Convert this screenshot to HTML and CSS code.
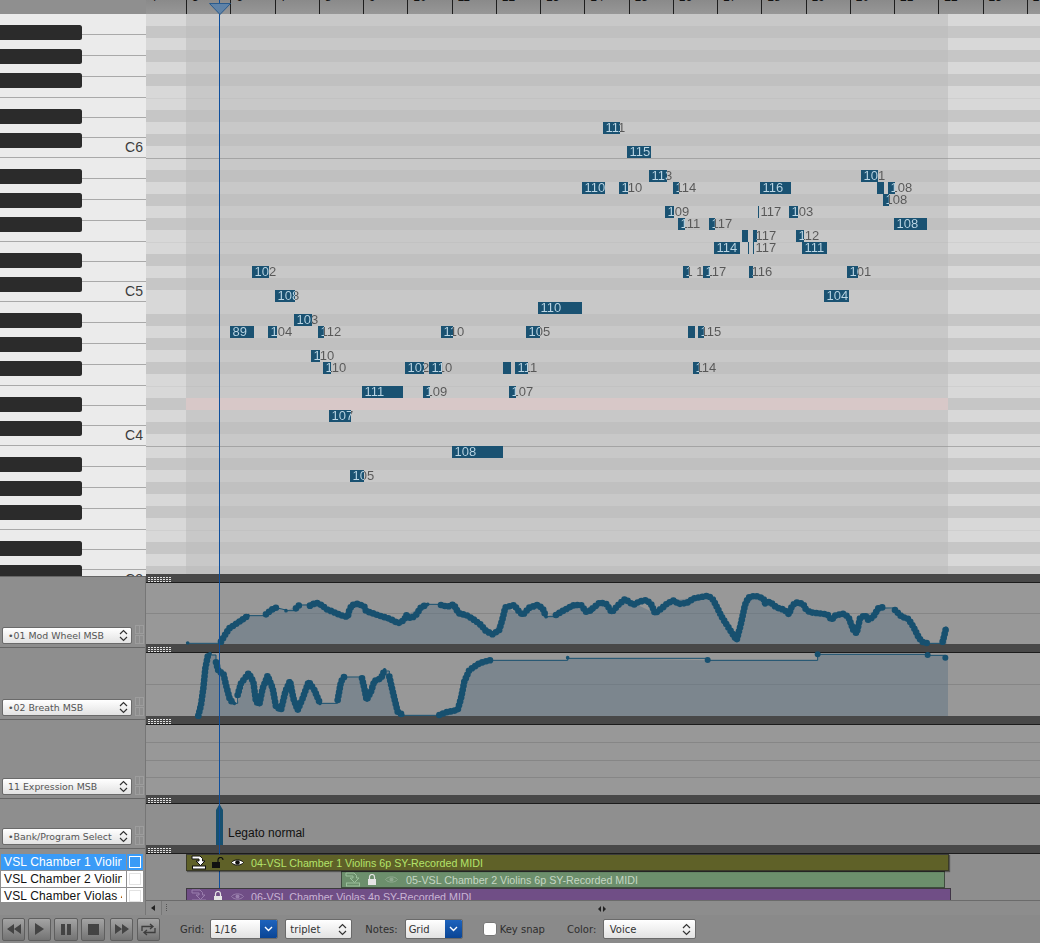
FILE: index.html
```html
<!DOCTYPE html>
<html lang="en">
<head>
<meta charset="utf-8">
<title>Piano roll</title>
<link rel="stylesheet" href="styles.css">
</head>
<body>
<div class="app">
  <div class="main">
    <aside class="left">
      <div class="corner"></div>
      <div class="piano">
        <svg class="keys" width="146" height="563" aria-hidden="true">
          <defs>
            <pattern id="octave" width="146" height="144" patternUnits="userSpaceOnUse">
              <rect width="146" height="144" fill="#ebebeb"/>
              <g fill="#a9a9a9">
                <rect x="82" y="20" width="64" height="1"/><rect x="82" y="41" width="64" height="1"/><rect x="82" y="62" width="64" height="1"/>
                <rect x="0" y="83" width="146" height="1"/>
                <rect x="82" y="103" width="64" height="1"/><rect x="82" y="123" width="64" height="1"/>
                <rect x="0" y="143" width="146" height="1"/>
              </g>
              <g fill="#2b2b2b">
                <rect x="-5" y="11" width="87" height="15" rx="2.5"/><rect x="-5" y="35" width="87" height="15" rx="2.5"/><rect x="-5" y="59" width="87" height="15" rx="2.5"/>
                <rect x="-5" y="95" width="87" height="15" rx="2.5"/><rect x="-5" y="119" width="87" height="15" rx="2.5"/>
              </g>
            </pattern>
          </defs>
          <rect width="146" height="563" fill="url(#octave)"/>
        </svg>
        <span class="oct oct-6">C6</span>
        <span class="oct oct-5">C5</span>
        <span class="oct oct-4">C4</span>
        <span class="oct oct-3">C3</span>
      </div>
      <div class="ctl ctl-1">
        <div class="sel lane-sel"><span>•01 Mod Wheel MSB</span><svg class="chev" width="9" height="13" viewBox="0 0 9 13"><path d="M1 5l3.5-3.5L8 5M1 8l3.5 3.5L8 8"/></svg></div>
        <div class="mini"><i></i><i></i></div>
      </div>
      <div class="ctl ctl-2">
        <div class="sel lane-sel"><span>•02 Breath MSB</span><svg class="chev" width="9" height="13" viewBox="0 0 9 13"><path d="M1 5l3.5-3.5L8 5M1 8l3.5 3.5L8 8"/></svg></div>
        <div class="mini"><i></i><i></i></div>
      </div>
      <div class="ctl ctl-3">
        <div class="sel lane-sel"><span>11 Expression MSB</span><svg class="chev" width="9" height="13" viewBox="0 0 9 13"><path d="M1 5l3.5-3.5L8 5M1 8l3.5 3.5L8 8"/></svg></div>
        <div class="mini"><i></i><i></i></div>
      </div>
      <div class="ctl ctl-4">
        <div class="sel lane-sel"><span>•Bank/Program Select</span><svg class="chev" width="9" height="13" viewBox="0 0 9 13"><path d="M1 5l3.5-3.5L8 5M1 8l3.5 3.5L8 8"/></svg></div>
        <div class="mini"><i></i><i></i></div>
      </div>
      <ul class="tracklist">
        <li class="tr tr-on"><span class="tname">VSL Chamber 1 Violins 6p</span><span class="tcheck"><b></b></span></li>
        <li class="tr"><span class="tname">VSL Chamber 2 Violins 6p</span><span class="tcheck"><b></b></span></li>
        <li class="tr"><span class="tname">VSL Chamber Violas 4p SY</span><span class="tcheck"><b></b></span></li>
      </ul>
    </aside>

    <section class="right">
      <div class="ruler">
        <span class="bar bar-first">4</span><span class="bar">5</span><span class="bar">6</span><span class="bar">7</span><span class="bar">8</span><span class="bar">9</span><span class="bar">10</span><span class="bar">11</span><span class="bar">12</span><span class="bar">13</span><span class="bar">14</span><span class="bar">15</span><span class="bar">16</span><span class="bar">17</span><span class="bar">18</span><span class="bar">19</span><span class="bar">20</span><span class="bar">21</span><span class="bar">22</span><span class="bar">23</span><span class="bar">24</span>
      </div>
      <div class="roll stripes">
        <div class="range stripes"><div class="pinkrow"></div></div>
        <div class="notes">
          <div class="note" style="left:603px;top:122px;--w:17px">111</div>
          <div class="note" style="left:627px;top:146px;--w:24px">115</div>
          <div class="note" style="left:649px;top:170px;--w:18px">113</div>
          <div class="note" style="left:582px;top:182px;--w:23px">110</div>
          <div class="note" style="left:619px;top:182px;--w:9px">110</div>
          <div class="note" style="left:673px;top:182px;--w:6px">114</div>
          <div class="note" style="left:760px;top:182px;--w:31px">116</div>
          <div class="note" style="left:861px;top:170px;--w:17px">101</div>
          <div class="note" style="left:877px;top:182px;--w:7px"></div>
          <div class="note" style="left:888px;top:182px;--w:7px">108</div>
          <div class="note" style="left:883px;top:194px;--w:6px">108</div>
          <div class="note" style="left:758px;top:206px;--w:1px">117</div>
          <div class="note" style="left:789px;top:206px;--w:9px">103</div>
          <div class="note" style="left:665px;top:206px;--w:9px">109</div>
          <div class="note" style="left:678px;top:218px;--w:7px">111</div>
          <div class="note" style="left:709px;top:218px;--w:6px">117</div>
          <div class="note" style="left:894px;top:218px;--w:33px">108</div>
          <div class="note" style="left:742px;top:230px;--w:6px"></div>
          <div class="note" style="left:753px;top:230px;--w:4px">117</div>
          <div class="note" style="left:796px;top:230px;--w:8px">112</div>
          <div class="note" style="left:714px;top:242px;--w:26px">114</div>
          <div class="note" style="left:748px;top:242px;--w:1px"></div>
          <div class="note" style="left:753px;top:242px;--w:1px">117</div>
          <div class="note" style="left:802px;top:242px;--w:25px">111</div>
          <div class="note" style="left:252px;top:266px;--w:17px">102</div>
          <div class="note" style="left:683px;top:266px;--w:6px">1 1</div>
          <div class="note" style="left:703px;top:266px;--w:7px">117</div>
          <div class="note" style="left:749px;top:266px;--w:4px">116</div>
          <div class="note" style="left:847px;top:266px;--w:11px">101</div>
          <div class="note" style="left:275px;top:290px;--w:20px">108</div>
          <div class="note" style="left:824px;top:290px;--w:25px">104</div>
          <div class="note" style="left:538px;top:302px;--w:44px">110</div>
          <div class="note" style="left:294px;top:314px;--w:18px">103</div>
          <div class="note" style="left:230px;top:326px;--w:24px">89</div>
          <div class="note" style="left:268px;top:326px;--w:9px">104</div>
          <div class="note" style="left:318px;top:326px;--w:6px">112</div>
          <div class="note" style="left:441px;top:326px;--w:12px">110</div>
          <div class="note" style="left:526px;top:326px;--w:14px">105</div>
          <div class="note" style="left:688px;top:326px;--w:7px"></div>
          <div class="note" style="left:698px;top:326px;--w:6px">115</div>
          <div class="note" style="left:311px;top:350px;--w:9px">110</div>
          <div class="note" style="left:323px;top:362px;--w:8px">110</div>
          <div class="note" style="left:405px;top:362px;--w:19px">102</div>
          <div class="note" style="left:429px;top:362px;--w:13px">110</div>
          <div class="note" style="left:503px;top:362px;--w:8px"></div>
          <div class="note" style="left:515px;top:362px;--w:13px">111</div>
          <div class="note" style="left:693px;top:362px;--w:6px">114</div>
          <div class="note" style="left:362px;top:386px;--w:41px">111</div>
          <div class="note" style="left:423px;top:386px;--w:7px">109</div>
          <div class="note" style="left:509px;top:386px;--w:7px">107</div>
          <div class="note" style="left:329px;top:410px;--w:22px">107</div>
          <div class="note" style="left:452px;top:446px;--w:51px">108</div>
          <div class="note" style="left:350px;top:470px;--w:14px">105</div>
        </div>
      </div>
      <div class="split"><span class="grip"></span></div>
      <div class="lane lane-1"></div>
      <div class="split"><span class="grip"></span></div>
      <div class="lane lane-2"></div>
      <div class="split"><span class="grip"></span></div>
      <div class="lane lane-3"></div>
      <div class="split"><span class="grip"></span></div>
      <div class="lane lane-4">
        <svg class="legato-bar" width="7" height="41" viewBox="0 0 7 41"><path d="M3.5 0L7 6V41H0V6z"/></svg>
        <span class="legato">Legato normal</span>
      </div>
      <div class="split"><span class="grip"></span></div>
      <div class="tracks">
        <div class="region reg-1">
          <svg class="midi" width="16" height="15" viewBox="0 0 16 15"><path class="midi-arrow" d="M1 1h8l2.500 2.500V6H14L9.500 10.500 5 6h3V4H1z"/><rect class="midi-base" x="1.500" y="11" width="13" height="3"/></svg>
          <svg class="lock" width="12" height="11" viewBox="0 0 12 11"><rect x="0" y="5" width="8" height="6"/><path class="shackle" d="M6 5V3a2.500 2.500 0 0 1 5 0"/></svg>
          <svg class="eye" width="13" height="9" viewBox="0 0 13 9"><path d="M.5 4.500C3 1 10 1 12.500 4.500 10 8 3 8 .5 4.500z" fill="#fff" stroke="#111"/><circle cx="6.500" cy="4.500" r="2.300" fill="#111"/></svg>
          <span class="rname">04-VSL Chamber 1 Violins 6p SY-Recorded MIDI</span>
        </div>
        <div class="region reg-2">
          <svg class="midi" width="16" height="15" viewBox="0 0 16 15"><path class="midi-arrow" d="M1 1h8l2.500 2.500V6H14L9.500 10.500 5 6h3V4H1z"/><rect class="midi-base" x="1.500" y="11" width="13" height="3"/></svg>
          <svg class="lock" width="12" height="11" viewBox="0 0 12 11"><rect x="2" y="5" width="8" height="6"/><path class="shackle" d="M3.500 5V3a2.500 2.500 0 0 1 5 0v2"/></svg>
          <svg class="eye" width="13" height="9" viewBox="0 0 13 9"><path d="M.5 4.500C3 1 10 1 12.500 4.500 10 8 3 8 .5 4.500z" fill="none" stroke="#8fa98f"/><circle cx="6.500" cy="4.500" r="2" fill="#8fa98f"/></svg>
          <span class="rname">05-VSL Chamber 2 Violins 6p SY-Recorded MIDI</span>
        </div>
        <div class="region reg-3">
          <svg class="midi" width="16" height="15" viewBox="0 0 16 15"><path class="midi-arrow" d="M1 1h8l2.500 2.500V6H14L9.500 10.500 5 6h3V4H1z"/><rect class="midi-base" x="1.500" y="11" width="13" height="3"/></svg>
          <svg class="lock" width="12" height="11" viewBox="0 0 12 11"><rect x="2" y="5" width="8" height="6"/><path class="shackle" d="M3.500 5V3a2.500 2.500 0 0 1 5 0v2"/></svg>
          <svg class="eye" width="13" height="9" viewBox="0 0 13 9"><path d="M.5 4.500C3 1 10 1 12.500 4.500 10 8 3 8 .5 4.500z" fill="none" stroke="#9a80ad"/><circle cx="6.500" cy="4.500" r="2" fill="#9a80ad"/></svg>
          <span class="rname">06-VSL Chamber Violas 4p SY-Recorded MIDI</span>
        </div>
      </div>
      <div class="hscroll">
        <span class="arrow-left"></span><span class="dots"></span>
        <span class="resize"><i></i><i></i></span>
      </div>

      <svg class="curves" viewBox="0 0 2682 450" width="894" height="150" aria-hidden="true">
        <defs>
          <path id="mod-a" d="M125,204h0 M225,200 240,175 250,160 265,150 280,140 295,130 306,122 M360,118 375,105 390,98 M420,107h0 M450,100 460,90 M492,92 510,83 530,92 540,102 560,110 582,120 605,126 610,105 618,90 636,86 655,95 660,108 683,116 710,125 733,132 756,145 775,135 780,120 795,130 810,120 825,97 845,88 M885,90 905,95 923,88 935,110 940,115 965,122 985,135 1005,150 1020,168 1040,178 1060,165 1070,130 1078,97 1105,90 1115,105 1130,120 1150,98 1175,90 1190,100 1200,125 M1230,120 1250,108 1270,97 1285,90 1305,90 1320,110 1340,105"/>
          <path id="mod-b" d="M8,100 30,82 50,88 65,112 85,90 105,72 130,90 147,80 170,75 185,90 195,115 215,100 232,85 252,76 265,87 290,84 312,70 338,65 355,62 370,75 395,125 420,165 440,195 452,150 465,90 475,68 495,62 520,70 525,85 540,80 560,98 582,104 597,118 605,95 617,82 640,87 645,100 660,112 678,114 712,118 725,135 735,122 758,116 775,125 790,165 800,175 810,130 825,120 835,135 850,125 865,100 878,97 M915,105 935,125 955,132 970,155 985,185 995,200 1010,204 M1058,200 1062,185 1068,160"/>
          <path id="br-a" d="M157,422 165,390 172,340 178,280 186,240 192,236 M210,262 218,290 232,295 240,330 252,375 265,385 M275,360 285,325 308,295 322,320 330,380 340,388 350,340 365,302 380,340 390,395 405,405 418,350 432,318 442,370 455,405 470,370 488,320 505,345 522,385 M575,375 585,320 595,305 M648,310 655,340 662,375 675,350 685,318 705,310 716,285 M730,305 745,370 755,410 770,420 M880,420 900,412 935,405 945,370 955,320 970,285 1000,265 1015,260 1035,255 M1265,248h0"/>
          <path id="br-b" d="M353,255h0 M683,238h0 M1013,240h0 M1066,248h0"/>
        </defs>
        <polygon class="area" points="225,207 225,200 250,160 306,122 358,122 390,98 420,107 460,90 510,83 605,126 618,90 655,95 756,145 780,120 845,88 923,88 1040,178 1078,97 1130,120 1175,90 1200,125 1285,90 1320,110 1350,95 1350,207"/>
        <polygon class="area" points="157,423 172,340 186,238 210,240 210,262 232,295 265,385 275,385 308,295 340,388 365,302 405,405 432,318 455,405 488,320 522,385 575,385 595,306 648,308 662,375 685,318 716,288 730,290 755,410 770,421 880,421 935,405 970,285 1035,256 1265,256 1265,250 1350,250 1350,423"/>
        <path class="thin" d="M125,205H225 M306,122H358 M390,98L420,105 M420,107H450 M460,90H492 M845,88H885 M1200,125H1230 M192,240H210V262 M265,385H275V360 M522,385H575 M595,306H648 M716,288H730V305 M770,421H880 M1035,256H1265V250H1350"/>
        <use href="#mod-a" class="core"/><use href="#mod-a" class="beads"/>
        <use href="#br-a" class="core"/><use href="#br-a" class="beads"/>
        <g transform="translate(1332 0)">
          <polygon class="area" points="18,207 18,88 30,82 65,112 105,72 195,115 252,76 355,62 440,195 475,68 495,62 597,118 617,82 678,114 725,135 758,116 800,175 825,120 878,97 915,105 955,132 1010,204 1055,204 1070,155 1070,207"/>
          <polygon class="area" points="18,423 18,250 353,256 683,256 683,238 1013,238 1013,241 1074,241 1074,423"/>
          <path class="thin" d="M878,99H912 M1010,205H1055 M18,250H353V256H683V238H1013V241H1066"/>
          <use href="#mod-b" class="core"/><use href="#mod-b" class="beads"/>
          <use href="#br-b" class="dot"/>
        </g>
      </svg>

      <div class="playhead"></div>
      <svg class="playtop" width="22" height="12" viewBox="0 0 22 12"><path d="M.5 .5h21L11 11.500z"/></svg>
    </section>
  </div>

  <footer class="toolbar">
    <button class="tb b-1"><svg width="14" height="10" viewBox="0 0 14 10"><path d="M7 0v10L0 5zM14 0v10L7 5z"/></svg></button>
    <button class="tb b-2"><svg width="9" height="12" viewBox="0 0 9 12"><path d="M0 0l9 6-9 6z"/></svg></button>
    <button class="tb b-3"><svg width="10" height="11" viewBox="0 0 10 11"><path d="M0 0h4v11H0zM6 0h4v11H6z"/></svg></button>
    <button class="tb b-4"><svg width="11" height="11" viewBox="0 0 11 11"><path d="M0 0h11v11H0z"/></svg></button>
    <button class="tb b-5"><svg width="14" height="10" viewBox="0 0 14 10"><path d="M0 0l7 5-7 5zM7 0l7 5-7 5z"/></svg></button>
    <button class="tb b-6"><svg width="15" height="13" viewBox="0 0 15 13"><path d="M1 8V3.500h10M9 1l3 2.500L9 6M14 5v4.500H4M6 7L3 9.500 6 12" fill="none" stroke="#3d3d3d" stroke-width="1.300"/></svg></button>
    <label class="tlabel l-grid">Grid:</label>
    <div class="sel blue s-grid"><span>1/16</span><i class="bluecap"><svg width="9" height="6" viewBox="0 0 9 6"><path d="M1 1l3.500 3.500L8 1"/></svg></i></div>
    <div class="sel plain s-trip"><span>triplet</span><svg class="chev" width="9" height="13" viewBox="0 0 9 13"><path d="M1 5l3.500-3.500L8 5M1 8l3.500 3.500L8 8"/></svg></div>
    <label class="tlabel l-notes">Notes:</label>
    <div class="sel blue s-notes"><span>Grid</span><i class="bluecap"><svg width="9" height="6" viewBox="0 0 9 6"><path d="M1 1l3.500 3.500L8 1"/></svg></i></div>
    <span class="check"></span>
    <label class="tlabel l-key">Key snap</label>
    <label class="tlabel l-color">Color:</label>
    <div class="sel plain s-color"><span>Voice</span><svg class="chev" width="9" height="13" viewBox="0 0 9 13"><path d="M1 5l3.500-3.500L8 5M1 8l3.500 3.500L8 8"/></svg></div>
  </footer>
</div>
</body>
</html>
```

FILE: styles.css
```css
* { box-sizing: border-box; }
html, body { margin: 0; padding: 0; background: #8e8e8e; }
body { width: 1040px; height: 943px; overflow: hidden; font-family: "Liberation Sans", Arial, sans-serif; }
.app { width: 1040px; height: 943px; display: flex; flex-direction: column; }
.main { display: flex; height: 915px; }

/* left column */
.left { width: 146px; flex: none; display: flex; flex-direction: column; background: #8e8e8e; border-right: 1px solid #767676; }
.corner { height: 14px; background: #8f8f8f; margin-right: -1px; }
.piano { position: relative; height: 563px; overflow: hidden; margin-right: -1px; border-bottom: 1px solid #666; }
.keys { display: block; }
.oct { position: absolute; right: 3px; font-size: 14px; line-height: 14px; color: #3c3c3c; }
.oct-6 { top: 126px; }
.oct-5 { top: 270px; }
.oct-4 { top: 414px; }
.oct-3 { top: 558px; }

.ctl { display: flex; align-items: flex-end; padding: 0 0 3px 2px; border-bottom: 1px solid #666; gap: 3px; }
.ctl-1 { height: 71px; }
.ctl-2 { height: 72px; }
.ctl-3 { height: 79px; }
.ctl-4 { height: 50px; }

.sel { display: flex; align-items: center; justify-content: space-between; background: linear-gradient(#fff, #e2e2e2); border: 1px solid #6a6a6a; border-radius: 2px; font-family: "DejaVu Sans", sans-serif; font-size: 10px; color: #4c4c4c; white-space: nowrap; overflow: hidden; }
.lane-sel { width: 130px; height: 17px; padding: 0 3px 0 5px; font-size: 9.4px; color: #555; }
.chev { flex: none; fill: none; stroke: #333; stroke-width: 1.2; }
.mini { display: flex; flex-direction: column; width: 9px; height: 19px; gap: 1px; }
.mini i { display: block; height: 9px; border: 1px solid #9d9d9d; background: linear-gradient(#9d9d9d, #9d9d9d) 50% 50% / 1px 100% no-repeat; }

.tracklist { list-style: none; margin: 5px 0 0; padding: 0 2px 0 1px; height: 48px; overflow: hidden; display: flex; flex-direction: column; gap: 1px; flex: none; }
.tr { display: flex; height: 16px; flex: none; gap: 1px; }
.tname { width: 125px; background: #fff; color: #111; font-size: 12px; line-height: 16px; padding-left: 3px; border-right: 4px solid #fff; letter-spacing: .15px; white-space: nowrap; overflow: hidden; }
.tcheck { width: 16px; background: #fff; display: flex; align-items: center; justify-content: center; }
.tcheck b { width: 12px; height: 12px; border: 1px solid #e2e2e2; background: #fff; }
.tr-on .tname { background: #3a9bf7; color: #fff; border-right-color: #3a9bf7; }
.tr-on .tcheck { background: #3a9bf7; }
.tr-on .tcheck b { border-color: #fff; background: #3a9bf7; }

/* right column */
.right { position: relative; flex: 1; min-width: 0; display: flex; flex-direction: column; overflow: hidden; background: #989898; }
.ruler { display: flex; align-items: flex-start; height: 14px; flex: none; background: linear-gradient(#8a8a8a, #979797); overflow: hidden; }
.bar { flex: none; width: 44.25px; height: 23px; margin-top: -9px; border-left: 1px solid #1e1e1e; padding-left: 5px; font-size: 12px; line-height: 12px; color: #111; overflow: hidden; }
.bar-first { width: 40px; border-left: 0; padding-left: 4px; }

.stripes { background-image: repeating-linear-gradient(180deg,
  var(--l) 0 12px, var(--d) 12px 24px, var(--l) 24px 36px, var(--d) 36px 48px, var(--l) 48px 60px, var(--d) 60px 72px,
  var(--l) 72px 84px, var(--line2) 84px 85px, var(--l) 85px 96px, var(--d) 96px 108px, var(--l) 108px 120px, var(--d) 120px 132px, var(--l) 132px 144px,
  var(--line) 144px 145px, var(--l) 145px 156px, var(--d) 156px 168px, var(--l) 168px 180px, var(--d) 180px 192px, var(--l) 192px 204px, var(--d) 204px 216px,
  var(--l) 216px 228px, var(--line2) 228px 229px, var(--l) 229px 240px, var(--d) 240px 252px, var(--l) 252px 264px, var(--d) 264px 276px, var(--l) 276px 288px); }
.roll { position: relative; height: 560px; flex: none; --l: #d8d8d8; --d: #c6c6c6; --line: #a9a9a9; --line2: #cfcfcf; }
.range { position: absolute; left: 40px; top: 0; bottom: 0; width: 762px; --l: #c8c8c8; --d: #c0c0c0; --line: #a4a4a4; --line2: #c2c2c2; }
.pinkrow { position: absolute; left: 0; right: 0; top: 384px; height: 12px; background: #d8c8c8; }
.notes { position: absolute; left: -146px; top: -14px; }
.note {
  position: absolute; height: 12px; min-width: var(--w); padding-left: 2.5px;
  font-size: 13px; line-height: 12px; white-space: nowrap; color: transparent;
  background-image: linear-gradient(90deg, #bcd6e4 var(--w), #575757 var(--w)), linear-gradient(#1a5272, #1a5272);
  background-size: 100% 100%, var(--w) 100%;
  background-repeat: no-repeat;
  -webkit-background-clip: text, border-box;
  background-clip: text, border-box;
}

.split { position: relative; height: 9px; flex: none; background: #484848; border-bottom: 1px solid #1c1c1c; padding: 3px 0 0 2px; }
.grip { display: block; width: 24px; height: 5px; background: repeating-linear-gradient(180deg, #e0e0e0 0 1px, #484848 1px 2px, #e0e0e0 2px 3px, #484848 3px 4px, #e0e0e0 4px 5px); -webkit-mask: repeating-linear-gradient(90deg, #000 0 2px, transparent 2px 3px); mask: repeating-linear-gradient(90deg, #000 0 2px, transparent 2px 3px); }
.lane { position: relative; flex: none; background: #989898; }
.lane-1 { height: 61px; background: linear-gradient(#868686, #868686) 0 30px / 100% 1px no-repeat, #989898; }
.lane-2 { height: 63px; background: linear-gradient(#868686, #868686) 0 31px / 100% 1px no-repeat, #989898; }
.lane-3 { height: 70px; background: linear-gradient(#868686, #868686) 0 17px / 100% 1px no-repeat, linear-gradient(#868686, #868686) 0 35px / 100% 1px no-repeat, linear-gradient(#868686, #868686) 0 52px / 100% 1px no-repeat, #989898; }
.lane-4 { height: 41px; background: #8f8f8f; }
.legato-bar { position: absolute; left: 70px; top: 0; fill: #17506f; }
.legato { position: absolute; left: 82px; top: 22px; font-size: 12px; line-height: 14px; color: #111; }

.tracks { position: relative; height: 46px; flex: none; overflow: hidden; background: #8e8e8e; }
.region { position: absolute; display: flex; align-items: center; height: 17px; border: 1px solid rgba(40,40,40,.65); border-top-color: #3c3c3c; font-size: 10.7px; white-space: nowrap; overflow: hidden; }
.reg-1 { left: 40px; top: 0; width: 763px; background: #5f6128; color: #b3e36a; z-index: 3; box-shadow: 1px 1px 1px rgba(0,0,0,.4); }
.reg-2 { left: 195px; top: 17px; width: 604px; background: #6c8f6c; color: #c6d7c4; z-index: 2; }
.reg-3 { left: 40px; top: 34px; width: 765px; background: #704e86; color: #c9b4d4; z-index: 1; }
.midi { flex: none; margin-left: 4px; }
.midi-arrow { fill: #fff; stroke: #111; stroke-width: 1; }
.midi-base { fill: #fff; stroke: #111; stroke-width: 1; }
.reg-2 .midi-arrow, .reg-2 .midi-base { fill: none; stroke: #9cc09c; }
.reg-3 .midi-arrow, .reg-3 .midi-base { fill: none; stroke: #9a7fae; }
.lock { flex: none; margin-left: 5px; }
.lock rect { fill: #111; }
.lock .shackle { fill: none; stroke: #111; stroke-width: 1.200; }
.reg-2 .lock rect, .reg-3 .lock rect { fill: #e4e4e4; }
.reg-2 .lock .shackle, .reg-3 .lock .shackle { stroke: #e4e4e4; }
.eye { flex: none; margin-left: 7px; }
.rname { margin-left: 7px; }
.reg-2 .rname { margin-left: 8px; }
.reg-2 .midi { margin-left: 3px; }

.hscroll { position: relative; flex: 1; display: flex; align-items: center; background: #8d8d8d; border-top: 1px solid #6b6b6b; }
.arrow-left { width: 16px; height: 14px; background: #8f8f8f; border-right: 1px solid #777; position: relative; }
.arrow-left::after { content: ""; position: absolute; left: 5px; top: 4px; border: 3px solid transparent; border-right: 4px solid #222; border-left: 0; }
.dots { width: 1px; height: 8px; margin-left: 4px; background: repeating-linear-gradient(180deg, #555 0 1px, transparent 1px 2px); }
.resize { position: absolute; left: 452px; top: 5px; display: flex; gap: 2px; }
.resize i { display: block; border: 3px solid transparent; border-left: 0; border-right: 3px solid #222; }
.resize i:last-child { border-left: 3px solid #222; border-right: 0; }

.curves { position: absolute; left: 0; top: 575px; }
.area { fill: #5f7383; fill-opacity: .5; }
.thin { fill: none; stroke: #17506f; stroke-width: 3; }
.core { fill: none; stroke: #17506f; stroke-width: 11; stroke-linecap: round; stroke-linejoin: round; }
.beads { fill: none; stroke: #17506f; stroke-width: 20; stroke-linecap: round; stroke-dasharray: 0 12; }
.dot { fill: none; stroke: #17506f; stroke-width: 18; stroke-linecap: round; }

.playhead { position: absolute; left: 73px; top: 0; width: 1px; height: 900px; background: #0f4f9c; }
.playtop { position: absolute; left: 63px; top: 3px; fill: #5f83a8; stroke: #2a5b8d; }

/* toolbar */
.toolbar { display: flex; align-items: center; height: 28px; flex: none; padding: 0 0 0 2px; background: #8a8a8a; }
.tb { display: flex; align-items: center; justify-content: center; flex: none; width: 23px; height: 23px; padding: 0; border: 1px solid #5f5f5f; border-radius: 2px; background: linear-gradient(#a4a4a4, #737373); }
.tb svg { fill: #444; }
.b-2 { margin-left: 3px; }
.b-3 { margin-left: 3px; width: 24px; }
.b-4 { margin-left: 3px; width: 24px; }
.b-5 { margin-left: 5px; }
.b-6 { margin-left: 4px; }
.tlabel { font-family: "DejaVu Sans", sans-serif; font-size: 10px; color: #2e2e2e; white-space: nowrap; }
.l-grid { margin-left: 20px; }
.toolbar .sel { height: 20px; font-size: 10px; color: #333; }
.blue { padding-left: 3px; }
.bluecap { align-self: stretch; width: 17px; display: flex; align-items: center; justify-content: center; background: linear-gradient(#1d63bd, #0a4595); }
.bluecap svg { fill: none; stroke: #fff; stroke-width: 1.400; }
.plain { padding: 0 4px 0 4px; }
.s-grid { width: 68px; margin-left: 6px; padding-right: 0; }
.s-trip { width: 67px; margin-left: 7px; }
.l-notes { margin-left: 13px; }
.s-notes { width: 58px; margin-left: 7px; }
.check { width: 14px; height: 14px; margin-left: 20px; background: #fff; border: 1px solid #777; border-radius: 3px; flex: none; }
.l-key { margin-left: 3px; }
.l-color { margin-left: 22px; }
.s-color { width: 93px; margin-left: 7px; padding-left: 5.5px; }
```
